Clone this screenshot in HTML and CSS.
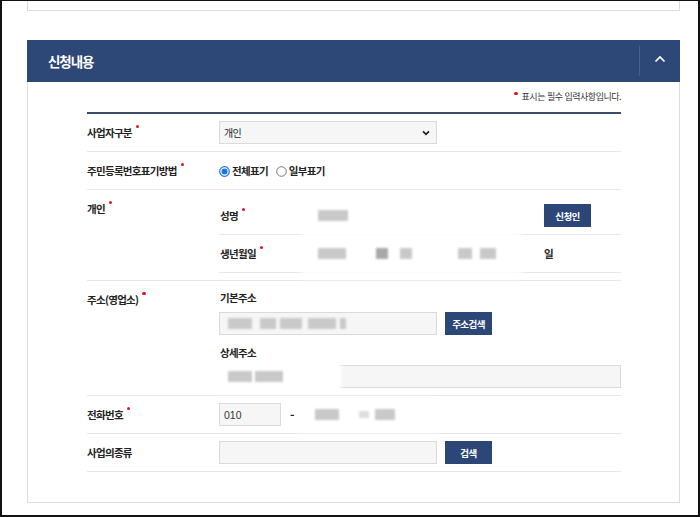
FILE: index.html
```html
<!DOCTYPE html>
<html lang="ko">
<head>
<meta charset="utf-8">
<title>신청내용</title>
<link rel="stylesheet" href="styles.css">
</head>
<body>
<div class="frame">
  <div class="topcard"></div>
  <section class="panel">
    <header class="panel-head">
      <h2 class="panel-title">신청내용</h2>
      <div class="toggle">
        <svg width="12" height="8" viewBox="0 0 12 8"><path d="M1.5 6.5 L6 2 L10.5 6.5" fill="none" stroke="#fff" stroke-width="1.6"/></svg>
      </div>
    </header>
    <div class="panel-body">
      <p class="note"><span class="dot note-dot"></span>표시는 필수 입력사항입니다.</p>
      <div class="form">
        <div class="row">
          <div class="label"><span class="req">사업자구분<span class="dot"></span></span></div>
          <div class="field">
            <div class="select-wrap">
              <div class="select">개인</div>
              <svg class="select-arrow" width="8" height="6" viewBox="0 0 8 6"><path d="M1 1.3 L4 4.3 L7 1.3" fill="none" stroke="#222" stroke-width="1.8"/></svg>
            </div>
          </div>
        </div>
        <div class="row">
          <div class="label"><span class="req">주민등록번호표기방법<span class="dot"></span></span></div>
          <div class="field radios">
            <span class="radio">
              <svg width="11" height="11" viewBox="0 0 11 11"><circle cx="5.5" cy="5.5" r="4.8" fill="#fff" stroke="#1a73e8" stroke-width="1.2"/><circle cx="5.5" cy="5.5" r="3" fill="#1a73e8"/></svg>
              전체표기
            </span>
            <span class="radio">
              <svg width="11" height="11" viewBox="0 0 11 11"><circle cx="5.5" cy="5.5" r="4.8" fill="#fff" stroke="#767676" stroke-width="1"/></svg>
              일부표기
            </span>
          </div>
        </div>
        <div class="row">
          <div class="label"><span class="req">개인<span class="dot"></span></span></div>
          <div class="field sub">
            <div class="subrow">
              <div class="sublabel"><span class="req">성명<span class="dot"></span></span></div>
              <div class="subvalue"><span class="blob" style="width:30px"></span></div>
              <div class="subextra"><span class="btn">신청인</span></div>
            </div>
            <div class="subrow">
              <div class="sublabel"><span class="req">생년월일<span class="dot"></span></span></div>
              <div class="subvalue birth">
                <span class="blob" style="width:28px"></span>
                <span class="blob dark" style="width:12px;margin-left:30px"></span>
                <span class="blob" style="width:12px;margin-left:12px"></span>
                <span class="blob" style="width:14px;margin-left:46px"></span>
                <span class="blob" style="width:16px;margin-left:8px"></span>
              </div>
              <div class="subextra"><span class="day">일</span></div>
            </div>
          </div>
        </div>
        <div class="row">
          <div class="label"><span class="req">주소(영업소)<span class="dot"></span></span></div>
          <div class="field addr">
            <div class="caption">기본주소</div>
            <div class="line">
              <div class="input w218"><span class="blob" style="width:24px"></span><span class="blob" style="width:16px;margin-left:8px"></span><span class="blob" style="width:22px;margin-left:4px"></span><span class="blob" style="width:28px;margin-left:6px"></span><span class="blob" style="width:6px;margin-left:4px"></span></div>
              <span class="btn">주소검색</span>
            </div>
            <div class="caption cap2">상세주소</div>
            <div class="line">
              <div class="input wide"><span class="mask"><span class="blob" style="width:24px"></span><span class="blob" style="width:28px;margin-left:3px"></span></span></div>
            </div>
          </div>
        </div>
        <div class="row">
          <div class="label"><span class="req">전화번호<span class="dot"></span></span></div>
          <div class="field phone">
            <div class="input w62">010</div>
            <span class="dash">-</span>
            <div class="phone-mask">
              <span class="blob" style="width:24px"></span>
              <span class="blob light" style="width:10px;margin-left:20px"></span>
              <span class="blob" style="width:20px;margin-left:6px"></span>
            </div>
          </div>
        </div>
        <div class="row">
          <div class="label">사업의종류</div>
          <div class="field line">
            <div class="input w218"></div>
            <span class="btn">검색</span>
          </div>
        </div>
      </div>
    </div>
  </section>
</div>
</body>
</html>
```
FILE: styles.css
```css
* { box-sizing: border-box; }
html, body { margin: 0; padding: 0; background: #fff; }
body {
  font-family: "Noto Sans CJK KR", "Noto Sans", sans-serif;
  color: #222;
}
.frame {
  width: 700px;
  height: 517px;
  border-style: solid;
  border-color: #111;
  border-width: 1px 2px 2px 2px;
  padding: 0 18px 0 25px;
  background: #fff;
  overflow: hidden;
}
.topcard {
  height: 10px;
  border: 1px solid #dcdcdc;
  border-top: none;
}
.panel { margin-top: 29px; }
.panel-head {
  height: 42px;
  background: #2d4877;
  display: flex;
  align-items: center;
  justify-content: space-between;
}
.panel-title {
  margin: 0 0 0 21px;
  color: #fff;
  font-size: 13.5px;
  font-weight: 700;
  letter-spacing: -1.1px;
  line-height: 42px;
}
.toggle {
  width: 41px;
  height: 30px;
  border-left: 1px solid #46608e;
  display: flex;
  align-items: center;
  justify-content: center;
  padding-bottom: 4px;
}
.panel-body {
  border: 1px solid #dcdcdc;
  border-top: none;
  padding: 0 58px 30px 59px;
}
.note {
  margin: 0;
  padding-top: 8px;
  height: 30px;
  line-height: 14px;
  font-size: 9px;
  letter-spacing: -0.5px;
  color: #333;
  text-align: right;
}
.dot {
  display: inline-block;
  width: 3.5px;
  height: 3.5px;
  border-radius: 50%;
  background: #e0141e;
  position: relative;
  top: -9px;
  margin-left: 4px;
}
.note-dot { top: -5px; margin: 0 4px 0 0; }
.form { border-top: 2px solid #3a4c6c; }
.row {
  display: flex;
  padding: 7px 0;
  border-bottom: 1px solid #e8e8e8;
}
.label {
  width: 132px;
  flex: none;
  font-size: 10.5px;
  font-weight: 700;
  letter-spacing: -0.7px;
  line-height: 23px;
}
.field { flex: 1; min-width: 0; }
.select-wrap { position: relative; width: 218px; }
.select {
  height: 23px;
  background: #f6f6f6;
  border: 1px solid #dadada;
  font-size: 10px;
  letter-spacing: -0.6px;
  line-height: 21px;
  padding-left: 4px;
}
.select-arrow { position: absolute; right: 7px; top: 9px; }
.radios {
  display: flex;
  align-items: center;
  height: 23px;
  gap: 8px;
  font-size: 10.5px;
  font-weight: 700;
  letter-spacing: -0.7px;
}
.radio { display: inline-flex; align-items: center; gap: 2px; }
.radio svg { margin-top: 1px; }
.sub { display: flex; flex-direction: column; }
.subrow {
  display: flex;
  height: 38px;
  align-items: center;
  border-bottom: 1px solid #e8e8e8;
}
.sublabel {
  width: 99px;
  flex: none;
  padding-left: 1px;
  font-size: 10.5px;
  font-weight: 700;
  letter-spacing: -0.7px;
}
.subvalue { width: 226px; flex: none; display: flex; align-items: center; }
.birth {
  background: #fff;
  align-self: stretch;
  margin-left: -13px;
  margin-right: 27px;
  padding-left: 13px;
  width: 212px;
  box-shadow: 0 0 6px 4px #fff;
  position: relative;
}
.subextra { flex: 1; display: flex; align-items: center; }
.day { font-size: 10.5px; font-weight: 700; padding-left: 0; }
.blob {
  display: inline-block;
  height: 11px;
  background: #c9c9c9;
  filter: blur(1.3px);
  flex: none;
}
.blob.dark { background: #a8a8a8; }
.blob.light { background: #dedede; height: 7px; }
.btn {
  display: inline-flex;
  align-items: center;
  justify-content: center;
  width: 47px;
  height: 23px;
  background: #2b4677;
  color: #fff;
  font-size: 9.5px;
  font-weight: 700;
  letter-spacing: -0.6px;
  flex: none;
}
.addr { display: flex; flex-direction: column; }
.caption {
  font-size: 10.5px;
  font-weight: 700;
  letter-spacing: -0.7px;
  line-height: 19px;
  padding-left: 1px;
  margin-bottom: 5px;
}
.cap2 { margin-top: 8px; margin-bottom: 3px; }
.line { display: flex; align-items: center; gap: 8px; }
.input {
  height: 23px;
  background: #f6f6f6;
  border: 1px solid #dadada;
  display: flex;
  align-items: center;
  padding-left: 8px;
  font-size: 10px;
  color: #333;
}
.w218 { width: 218px; }
.wide { width: 402px; padding-left: 0; overflow: visible; }
.mask {
  display: flex;
  align-items: center;
  align-self: stretch;
  margin: -2px 0 -2px -4px;
  padding-left: 12px;
  width: 122px;
  background: #fff;
  box-shadow: 0 0 4px 3px #fff;
}
.w62 { width: 62px; padding-left: 4px; font-family: "Liberation Sans", sans-serif; font-size: 10.5px; }
.phone { display: flex; align-items: center; height: 23px; }
.dash { font-weight: 700; font-size: 12px; margin: 0 9px 0 9px; }
.phone-mask {
  display: flex;
  align-items: center;
  height: 26px;
  width: 132px;
  padding-left: 12px;
  background: #fff;
  box-shadow: 0 0 5px 3px #fff;
}
```
